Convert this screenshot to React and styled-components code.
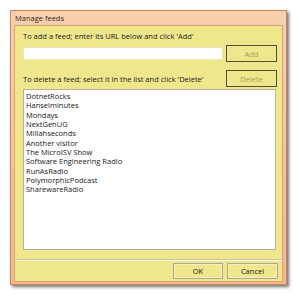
import React from "react"
import styled, { createGlobalStyle } from "styled-components"

const feeds = [
    "DotnetRocks",
    "Hanselminutes",
    "Mondays",
    "NextGenUG",
    "Millahseconds",
    "Another visitor",
    "The MicroISV Show",
    "Software Engineering Radio",
    "RunAsRadio",
    "PolymorphicPodcast",
    "SharewareRadio",
]

const Global = createGlobalStyle`
body {
    margin: 0;
    background: #ffffff;
    font-family: "Open Sans", "Noto Sans", sans-serif;
}
`

const Page = styled.div`
padding: 10px 0 0 10px;
width: 300px;
height: 296px;
box-sizing: border-box;
`

const Window = styled.div`
width: 277px;
height: 275px;
box-sizing: border-box;
border: 1px solid #c9865a;
background: linear-gradient(180deg, #f9cfae 0%, #f4b68c 100%);
box-shadow: 2px 2px 3px rgba(0, 0, 0, 0.55);
display: flex;
flex-direction: column;
padding: 0 3px 2px 3px;
`

const TitleBar = styled.div`
height: 14px;
display: flex;
align-items: center;
padding-left: 1px;
font-size: 7.5px;
color: #3a2a20;
`

const Content = styled.div`
flex: 1;
background: #f0e68c;
border: 1px solid #dca07a;
display: flex;
flex-direction: column;
padding: 5px 5px 0 8px;
`

const Label = styled.div`
font-size: 7.5px;
color: #222;
height: 10px;
line-height: 10px;
`

const Row = styled.div`
display: flex;
align-items: center;
justify-content: space-between;
margin-top: ${p => p.$top}px;
height: 17px;
`

const Input = styled.div`
width: 200px;
height: 13px;
box-sizing: border-box;
background: #fff;
border: 1px solid #ece6b8;
`

const Button = styled.div`
width: ${p => p.$w || 51}px;
height: ${p => p.$h || 17}px;
box-sizing: border-box;
border: 1px solid ${p => (p.$disabled ? "#55502e" : "#a9a798")};
box-shadow: ${p => (p.$disabled ? "none" : "inset 0 0 0 1px #f6f0b8")};
display: flex;
align-items: center;
justify-content: center;
font-size: 7.5px;
color: ${p => (p.$disabled ? "#a39d62" : "#222")};
background: #f0e68c;
`

const List = styled.div`
margin-top: 2px;
margin-right: 1px;
height: 161px;
box-sizing: border-box;
background: #fff;
border: 1px solid #b4b2a4;
padding: 2px 2px;
`

const Item = styled.div`
font-size: 7.5px;
line-height: 9.33px;
height: 9.33px;
color: #1a1a1a;
white-space: nowrap;
`

const Separator = styled.div`
margin: 9px -5px 0 -6px;
border-top: 1px solid #c8c4a8;
border-bottom: 1px solid #faf6d8;
`

const Footer = styled.div`
display: flex;
justify-content: flex-end;
gap: 4px;
margin-top: 2px;
margin-right: -1px;
`

export default function App() {
    return (
        <>
            <Global />
            <Page>
                <Window>
                    <TitleBar>Manage feeds</TitleBar>
                    <Content>
                        <Label>To add a feed; enter its URL below and click 'Add'</Label>
                        <Row $top={4}>
                            <Input />
                            <Button $disabled>Add</Button>
                        </Row>
                        <Row $top={8}>
                            <Label>To delete a feed; select it in the list and click 'Delete'</Label>
                            <Button $disabled>Delete</Button>
                        </Row>
                        <List>
                            {feeds.map(f => <Item key={f}>{f}</Item>)}
                        </List>
                        <Separator />
                        <Footer>
                            <Button $w={50} $h={16}>OK</Button>
                            <Button $w={51} $h={16}>Cancel</Button>
                        </Footer>
                    </Content>
                </Window>
            </Page>
        </>
    )
}
